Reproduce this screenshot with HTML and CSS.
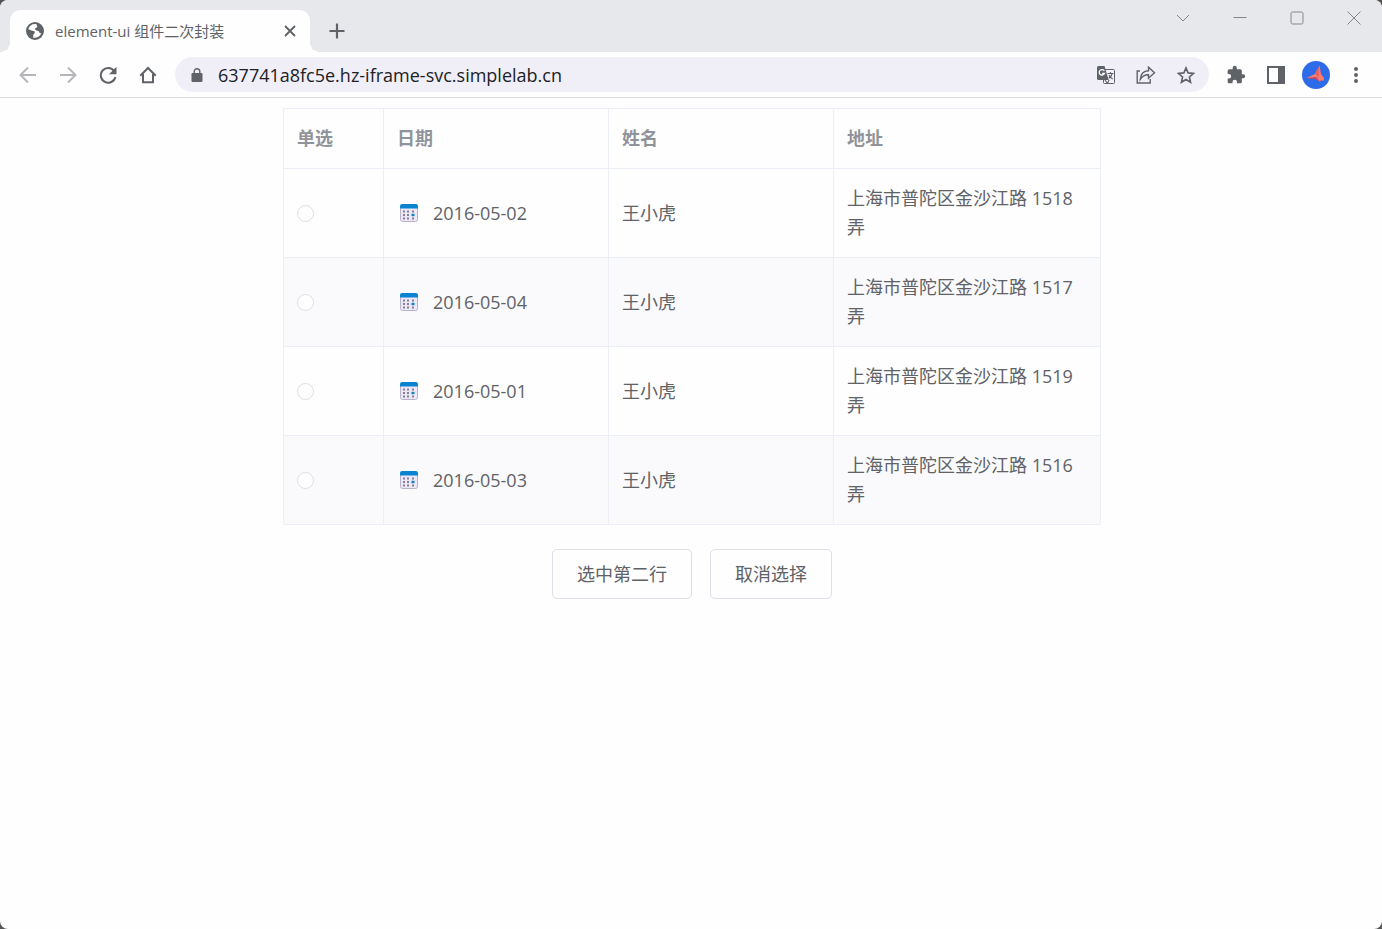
FILE: index.html
```html
<!DOCTYPE html>
<html lang="zh-CN">
<head>
<meta charset="utf-8">
<meta name="viewport" content="width=device-width, initial-scale=1">
<title>element-ui 组件二次封装</title>
<link rel="stylesheet" href="styles.css">
</head>
<body>
<svg class="sprite" aria-hidden="true">
  <symbol id="calendar" viewBox="0 0 18 18">
    <rect x="0.5" y="1" width="17" height="16.5" rx="2" fill="#ece8f5" stroke="#b9b3c9"/>
    <path d="M0 4.500V2.200Q0 0 2.200 0h13.600Q18 0 18 2.200V4.500z" fill="#0a83d0"/>
    <path d="M3 7.500h2M7 7.500h2M12 7.500h2M3 11h2M7 11h2M3 14.500h2M7 14.500h2M12 14.500h2" stroke="#857f96" stroke-width="1.800"/>
    <rect x="11.500" y="9.800" width="3" height="2.400" fill="#0a83d0"/>
  </symbol>
</svg>
<div class="window">
  <header class="tabstrip">
    <div class="tab">
      <svg class="tab-icon" viewBox="0 0 18 18" aria-hidden="true"><circle cx="9" cy="9" r="9" fill="#5f6368"/><path d="M10.5 2.1C6.500 1.300 3.300 3.500 2.300 7.200L6.200 8.700C8.300 8.700 9.200 9.400 8.600 11.300L7.200 12.700V15.700C11 16.400 14.200 14.200 15.400 11.200C13.800 11.200 13 10.300 12.600 8.900C10.900 8.700 9.500 8.200 8.800 6.900C9.200 5.600 10.700 6 11.200 4.900C11.500 4 10.500 3.500 10.500 2.100z" fill="#fff"/></svg>
      <span class="tab-title">element-ui 组件二次封装</span>
      <button class="tab-close" aria-label="关闭标签页"><svg width="12" height="12" viewBox="0 0 12 12"><path d="M1 1l10 10M11 1L1 11" stroke="#5f6368" stroke-width="1.900"/></svg></button>
    </div>
    <button class="new-tab" aria-label="新标签页"><svg width="16" height="16" viewBox="0 0 16 16"><path d="M8 0.500v15M0.500 8h15" stroke="#5f6368" stroke-width="2.200"/></svg></button>
    <div class="window-controls">
      <button class="control" aria-label="搜索标签页"><svg width="14" height="14" viewBox="0 0 14 14"><path d="M1 4l6 6 6-6"/></svg></button>
      <button class="control" aria-label="最小化"><svg width="14" height="14" viewBox="0 0 14 14"><path d="M0.500 6.500h13"/></svg></button>
      <button class="control" aria-label="最大化"><svg width="14" height="14" viewBox="0 0 14 14"><rect x="1" y="1" width="12" height="12" rx="1.500"/></svg></button>
      <button class="control" aria-label="关闭"><svg width="14" height="14" viewBox="0 0 14 14"><path d="M0.500 0.500l13 13M13.500 0.500l-13 13"/></svg></button>
    </div>
  </header>
  <nav class="toolbar">
    <button class="tool faded" aria-label="后退"><svg width="18" height="18" viewBox="0 0 18 18"><path d="M17 9H2M9 1.500L1.500 9 9 16.500"/></svg></button>
    <button class="tool faded" aria-label="前进"><svg width="18" height="18" viewBox="0 0 18 18"><path d="M1 9h15M9 1.500L16.500 9 9 16.500"/></svg></button>
    <button class="tool" aria-label="重新加载"><svg width="18" height="18" viewBox="0 0 18 18"><path d="M15.200 5A7.400 7.400 0 1 0 16.400 11"/><path d="M17.500 0.800v7.400H10z" fill="#5f6368" stroke="none"/></svg></button>
    <button class="tool" aria-label="主页"><svg width="18" height="18" viewBox="0 0 18 18"><path d="M1.300 9.700L9 2l7.700 7.700M4 8v8.300h10V8"/></svg></button>
    <div class="omnibox">
      <svg class="lock" width="12" height="14" viewBox="0 0 12 14" aria-hidden="true"><rect x="0.500" y="5" width="11" height="9" rx="1.200" fill="#5f6368"/><path d="M3.200 5.500V3.500a2.800 2.800 0 0 1 5.600 0v2" fill="none" stroke="#5f6368" stroke-width="1.400"/></svg>
      <input class="url" type="text" aria-label="地址" value="637741a8fc5e.hz-iframe-svc.simplelab.cn">
      <button class="tool" aria-label="翻译此页"><svg width="18" height="18" viewBox="0 0 18 18"><rect x="6.500" y="3.500" width="11" height="14" rx="1" fill="#f3f2f8" stroke-width="1"/><path d="M1.500 0h6l4.200 14H1.500Q0 14 0 12.500v-11Q0 0 1.500 0z" fill="#5f6368" stroke="none"/><path d="M7.300 5A2.700 2.700 0 1 0 7.500 7.300H5.200" stroke="#fff" stroke-width="1.300"/><path d="M10.500 7.500h6M13.500 6v1.500M15.200 7.500q-.8 3.200-3.500 4.800M12 9q1.200 2.500 3.700 4M8 14l2.500 3.500 1.500-3.500" stroke-width="1.100"/></svg></button>
      <button class="tool" aria-label="分享"><svg width="20" height="18" viewBox="0 0 20 18"><path d="M4 5H1.200v12h13v-4M4.300 13.300C4.700 8 8 5 12.500 4.800V1.200l6 5.600-6 5.400V8.800C9 8.700 6.500 10 4.300 13.300z" stroke-width="1.400"/></svg></button>
      <button class="tool" aria-label="收藏"><svg width="18" height="18" viewBox="0 0 18 18"><path d="M9 1.900l2.100 5 5.400.5-4.100 3.600 1.200 5.300L9 13.500l-4.600 2.800L5.600 11 1.500 7.400l5.400-.5z" stroke-width="1.600"/></svg></button>
    </div>
    <button class="tool" aria-label="扩展程序"><svg width="20" height="20" viewBox="0 0 24 24"><path d="M20.500 11H19V7c0-1.100-.9-2-2-2h-4V3.500a2.500 2.500 0 0 0-5 0V5H4c-1.100 0-2 .9-2 2v3.800h1.500a2.700 2.700 0 0 1 0 5.400H2V20c0 1.100.9 2 2 2h3.800v-1.500a2.700 2.700 0 0 1 5.400 0V22H17c1.100 0 2-.9 2-2v-4h1.500a2.500 2.500 0 0 0 0-5z" fill="#5f6368" stroke="none"/></svg></button>
    <button class="tool" aria-label="侧边栏"><svg width="18" height="18" viewBox="0 0 18 18"><rect x="1" y="1" width="16" height="16"/><path d="M11 1h6v16h-6z" fill="#5f6368" stroke="none"/></svg></button>
    <button class="tool" aria-label="个人资料"><svg width="28" height="28" viewBox="0 0 28 28"><g stroke="none"><circle cx="14" cy="14" r="14" fill="#2d6be8"/><path d="M4.500 17L13 13 17.500 4.500l1.500 8.500 3 4-.5 3-2.500-1-1 2-4.500-3z" fill="#ff7b70"/><path d="M4.500 17l9.500-1 4.500 5-4.500-2.500z" fill="#a34a78"/><path d="M13 13l4.500-8.500L16.500 17z" fill="#ee5f60"/></g></svg></button>
    <button class="tool" aria-label="更多"><svg width="6" height="18" viewBox="0 0 6 18"><g fill="#5f6368" stroke="none"><circle cx="3" cy="3" r="2"/><circle cx="3" cy="9" r="2"/><circle cx="3" cy="15" r="2"/></g></svg></button>
  </nav>
  <main class="page">
    <table class="records">
      <colgroup><col class="col-pick"><col class="col-date"><col class="col-name"><col></colgroup>
      <thead>
        <tr><th scope="col">单选</th><th scope="col">日期</th><th scope="col">姓名</th><th scope="col">地址</th></tr>
      </thead>
      <tbody>
        <tr><td><input class="radio" type="radio" name="row" aria-label="选择 2016-05-02"></td><td><span class="date"><svg class="calendar" aria-hidden="true"><use href="#calendar"/></svg>2016-05-02</span></td><td>王小虎</td><td>上海市普陀区金沙江路 1518 弄</td></tr>
        <tr><td><input class="radio" type="radio" name="row" aria-label="选择 2016-05-04"></td><td><span class="date"><svg class="calendar" aria-hidden="true"><use href="#calendar"/></svg>2016-05-04</span></td><td>王小虎</td><td>上海市普陀区金沙江路 1517 弄</td></tr>
        <tr><td><input class="radio" type="radio" name="row" aria-label="选择 2016-05-01"></td><td><span class="date"><svg class="calendar" aria-hidden="true"><use href="#calendar"/></svg>2016-05-01</span></td><td>王小虎</td><td>上海市普陀区金沙江路 1519 弄</td></tr>
        <tr><td><input class="radio" type="radio" name="row" aria-label="选择 2016-05-03"></td><td><span class="date"><svg class="calendar" aria-hidden="true"><use href="#calendar"/></svg>2016-05-03</span></td><td>王小虎</td><td>上海市普陀区金沙江路 1516 弄</td></tr>
      </tbody>
    </table>
    <div class="actions">
      <button class="action">选中第二行</button>
      <button class="action">取消选择</button>
    </div>
  </main>
</div>
</body>
</html>
```

FILE: styles.css
```css
* { box-sizing: border-box; }

body {
  margin: 0;
  background: #555;
  font-family: "Open Sans", "Noto Sans CJK SC", sans-serif;
  font-size: 18px;
  color: #606266;
}

button {
  margin: 0;
  padding: 0;
  border: 0;
  background: none;
  font: inherit;
  color: inherit;
}

svg { display: block; flex: none; }

.sprite { position: absolute; width: 0; height: 0; }

.window {
  display: flex;
  flex-direction: column;
  min-height: 100vh;
  overflow: hidden;
  border-radius: 8px;
  background: #fefefe;
}

/* Tab strip */
.tabstrip {
  display: flex;
  align-items: flex-end;
  height: 52px;
  padding-left: 10px;
  background: #e7e8ec;
}

.tab {
  position: relative;
  display: flex;
  align-items: center;
  width: 300px;
  height: 42px;
  padding: 0 10px 0 16px;
  border-radius: 10px 10px 0 0;
  background: #fefefe;
}

.tab::before,
.tab::after {
  content: "";
  position: absolute;
  bottom: 0;
  width: 10px;
  height: 10px;
}

.tab::before {
  right: 100%;
  background: radial-gradient(circle at 0 0, transparent 10px, #fefefe 10px);
}

.tab::after {
  left: 100%;
  background: radial-gradient(circle at 100% 0, transparent 10px, #fefefe 10px);
}

.tab-icon { width: 18px; height: 18px; }

.tab-title {
  flex: 1;
  margin-left: 11px;
  font-size: 15px;
  line-height: 20px;
  white-space: nowrap;
}

.tab-close,
.new-tab {
  display: grid;
  place-items: center;
  width: 20px;
  height: 42px;
}

.new-tab { width: 34px; margin-left: 10px; }

.window-controls {
  display: flex;
  align-self: flex-start;
  margin-left: auto;
}

.control {
  display: grid;
  place-items: center;
  width: 57px;
  height: 36px;
}

.control svg { fill: none; stroke: #85878b; stroke-width: 1; }

/* Toolbar */
.toolbar {
  display: flex;
  align-items: center;
  height: 46px;
  padding: 0 6px 0 8px;
  border-bottom: 1px solid #d9dadd;
}

.tool {
  display: grid;
  flex: none;
  place-items: center;
  width: 40px;
  height: 35px;
}

.tool svg { fill: none; stroke: #5f6368; stroke-width: 2; }

.tool.faded svg { stroke: #b4b6b9; }

.omnibox {
  display: flex;
  flex: 1;
  align-items: center;
  min-width: 0;
  height: 35px;
  margin: 0 7px;
  padding: 0 3px 0 16px;
  border-radius: 18px;
  background: #f0eff7;
}

.url {
  flex: 1;
  min-width: 0;
  margin: 0 0 0 15px;
  padding: 0;
  border: 0;
  outline: 0;
  background: none;
  font: inherit;
  line-height: 24px;
  color: #202124;
}

/* Page */
.page { padding: 10px 16px 10px 18px; }

.records {
  width: 100%;
  max-width: 818px;
  margin: 0 auto;
  border: solid #ebeef5;
  border-width: 1px 0 0 1px;
  border-spacing: 0;
  table-layout: fixed;
  line-height: 29px;
}

.col-pick { width: 100px; }

.col-date,
.col-name { width: 225px; }

.records th,
.records td {
  padding: 15px 13px;
  border: solid #ebeef5;
  border-width: 0 1px 1px 0;
  text-align: left;
}

.records th { font-weight: 700; color: #909399; }

.records tbody tr:nth-child(even) { background: #fafafc; }

.radio {
  display: block;
  width: 17px;
  height: 17px;
  margin: 0;
  appearance: none;
  border: 1px solid #dcdfe6;
  border-radius: 50%;
  background: #fefefe;
}

.radio:checked { border: 5px solid #409eff; }

.date {
  display: flex;
  align-items: center;
  gap: 15px;
  padding-left: 3px;
}

.calendar { width: 18px; height: 18px; }

.actions {
  display: flex;
  justify-content: center;
  gap: 18px;
  margin-top: 24px;
}

.action {
  height: 50px;
  padding: 0 24px 3px;
  border: 1px solid #dcdfe6;
  border-radius: 5px;
  background: #fefefe;
}
```
